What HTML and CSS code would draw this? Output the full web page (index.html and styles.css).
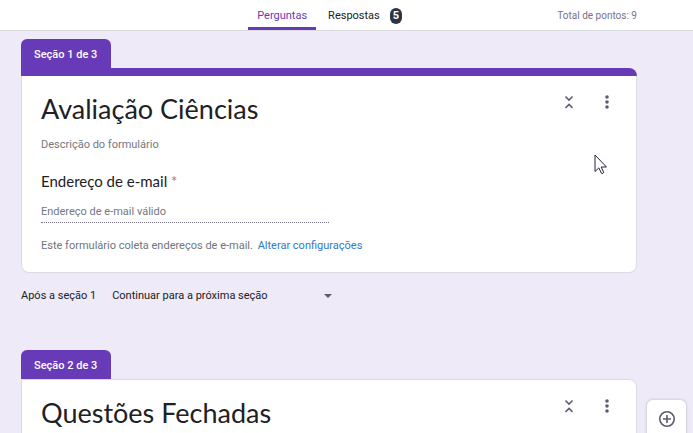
FILE: index.html
```html
<!DOCTYPE html>
<html lang="pt-BR">
<head>
  <meta charset="UTF-8">
  <meta name="viewport" content="width=device-width, initial-scale=1.0">
  <title>Avaliação Ciências</title>
  <link rel="stylesheet" href="styles.css">
</head>
<body>

  <header class="topbar">
    <nav class="tabs">
      <button class="tab active" type="button">Perguntas</button>
      <button class="tab" type="button">Respostas <span class="badge">5</span></button>
    </nav>
    <span class="points">Total de pontos: 9</span>
  </header>

  <main class="workspace">
    <section class="section">
      <div class="section-tab">Seção 1 de 3</div>
      <div class="section-bar"></div>
      <div class="card first">
        <div class="card-head">
          <h1 class="title">Avaliação Ciências</h1>
          <button class="icon-btn" type="button" aria-label="Recolher seção">
            <svg width="16" height="16" viewBox="0 0 16 16"><path d="M4.5 2.500l3.500 3.500 3.500-3.500M4.500 14l3.500-3.500 3.500 3.500"/></svg>
          </button>
          <button class="icon-btn dots" type="button" aria-label="Mais opções">
            <svg width="16" height="16" viewBox="0 0 16 16"><circle cx="8" cy="3" r="1.800"/><circle cx="8" cy="8" r="1.800"/><circle cx="8" cy="13" r="1.800"/></svg>
          </button>
        </div>
        <input class="description" type="text" placeholder="Descrição do formulário" aria-label="Descrição do formulário">
        <label class="question" for="email">Endereço de e-mail <span class="required">*</span></label>
        <input class="email" type="email" id="email" placeholder="Endereço de e-mail válido">
        <p class="note">Este formulário coleta endereços de e-mail. <a href="#">Alterar configurações</a></p>
      </div>
    </section>

    <div class="after-section">
      <label for="next">Após a seção 1</label>
      <div class="select-box">
        <select id="next">
          <option>Continuar para a próxima seção</option>
        </select>
        <svg class="arrow" width="8" height="4" viewBox="0 0 8 4"><path d="M0 0h8L4 4z"/></svg>
      </div>
    </div>

    <section class="section">
      <div class="section-tab">Seção 2 de 3</div>
      <div class="card">
        <div class="card-head">
          <h2 class="title">Questões Fechadas</h2>
          <button class="icon-btn" type="button" aria-label="Recolher seção">
            <svg width="16" height="16" viewBox="0 0 16 16"><path d="M4.500 2.500l3.500 3.500 3.500-3.500M4.500 14l3.500-3.500 3.500 3.500"/></svg>
          </button>
          <button class="icon-btn dots" type="button" aria-label="Mais opções">
            <svg width="16" height="16" viewBox="0 0 16 16"><circle cx="8" cy="3" r="1.800"/><circle cx="8" cy="8" r="1.800"/><circle cx="8" cy="13" r="1.800"/></svg>
          </button>
        </div>
      </div>
    </section>

    <aside class="toolbar">
      <button class="icon-btn" type="button" aria-label="Adicionar pergunta">
        <svg width="18" height="18" viewBox="0 0 18 18"><circle cx="9" cy="9" r="7.200"/><path d="M9 5v8M5 9h8"/></svg>
      </button>
    </aside>
  </main>

  <svg class="cursor" width="14" height="21" viewBox="0 0 14 21"><path d="M1 1v16.500l3.800-3.600 2.700 5.400c1 .6 2.300 0 2-1.300L7.200 13H12.500z"/></svg>

</body>
</html>
```
FILE: styles.css
```css
* {
  box-sizing: border-box;
}

body {
  display: flex;
  flex-direction: column;
  height: 100vh;
  margin: 0;
  overflow: hidden;
  font-family: Roboto, Arial, sans-serif;
  font-size: 11px;
  line-height: 16px;
  color: #202124;
  background-color: #eeeaf8;
}

button,
input,
select {
  padding: 0;
  border: none;
  background: none;
  font: inherit;
  color: inherit;
}

.topbar {
  display: grid;
  grid-template-columns: 1fr auto 1fr;
  padding: 0 56px 0 21px;
  background-color: white;
  border-bottom: 1px solid #dadce0;
}

.tabs {
  grid-column: 2;
  display: flex;
  gap: 4px;
}

.tab {
  display: flex;
  align-items: center;
  gap: 10px;
  height: 30px;
  padding: 4px 8px 2px;
}

.tab.active {
  padding-bottom: 0;
  padding-right: 9px;
  padding-left: 9px;
  border-bottom: 3px solid #673ab7;
  border-radius: 2px 2px 0 0;
  color: #673ab7;
}

.badge {
  width: 12px;
  border-radius: 6px;
  background-color: #2d3446;
  color: white;
  font-weight: 700;
  text-align: center;
}

.points {
  align-self: center;
  justify-self: end;
  padding-top: 2px;
  font-size: 10px;
  color: #77738a;
}

.workspace {
  display: grid;
  grid-template-columns: 1fr 39px;
  align-content: start;
  column-gap: 10px;
  flex: 1;
  padding: 8px 7px 0 21px;
  overflow: hidden;
}

.section,
.after-section {
  grid-column: 1;
}

.section-tab {
  width: fit-content;
  padding: 8px 14px 5px 13px;
  border-radius: 6px 6px 0 0;
  background-color: #673ab7;
  color: white;
  font-weight: 500;
}

.section-bar {
  height: 8px;
  border-radius: 0 8px 0 0;
  background-color: #673ab7;
}

.card {
  padding: 14px 19px 18px;
  background-color: white;
  border: 1px solid #dadce0;
  border-radius: 0 8px 8px 8px;
}

.card.first {
  border-top: none;
  border-radius: 0 0 8px 8px;
}

.card-head {
  display: flex;
  align-items: flex-start;
  gap: 22px;
}

.title {
  flex: 1;
  margin: 0;
  font-family: "Google Sans", Lato, sans-serif;
  font-size: 27px;
  font-weight: 400;
  line-height: 38px;
}

.icon-btn {
  display: flex;
  margin-top: 4px;
  fill: none;
  stroke: #5f5b6b;
  stroke-width: 1.6;
}

.dots {
  margin-right: 2px;
  fill: #5f5b6b;
  stroke: none;
}

.description,
.email {
  display: block;
  height: 16px;
  outline: none;
}

.description {
  width: 100%;
  margin-top: 9px;
}

::placeholder {
  color: #757780;
  opacity: 1;
}

.question {
  display: block;
  margin-top: 18px;
  font-family: "Google Sans", Lato, sans-serif;
  font-size: 15px;
  line-height: 20px;
}

.required {
  color: #c5723d;
}

.email {
  width: 50%;
  height: 22px;
  margin-top: 10px;
  border-bottom: 1px dotted #77738a;
}

.note {
  margin: 15px 0 0;
  color: #70757a;
}

.note a {
  margin-left: 2px;
  color: #3079c8;
  text-decoration: none;
}

.after-section {
  display: flex;
  align-items: center;
  gap: 16px;
  padding: 15px 0 46px;
}

.select-box {
  display: flex;
  align-items: center;
  width: 220px;
}

.select-box select {
  flex: 1;
  height: 16px;
  appearance: none;
}

.arrow {
  fill: #5f5b6b;
  pointer-events: none;
}

.toolbar {
  grid-column: 2;
  display: flex;
  justify-content: center;
  align-items: flex-start;
  height: 240px;
  margin: 50px 0 -240px;
  padding-top: 6px;
  border-radius: 6px;
  background-color: white;
  box-shadow: 0 0 2px 1px #d3cfde;
}

/* mouse pointer lying over the form */
.cursor {
  position: absolute;
  top: 154px;
  left: 594px;
  fill: white;
  stroke: #25213a;
  stroke-width: 1;
}
```
